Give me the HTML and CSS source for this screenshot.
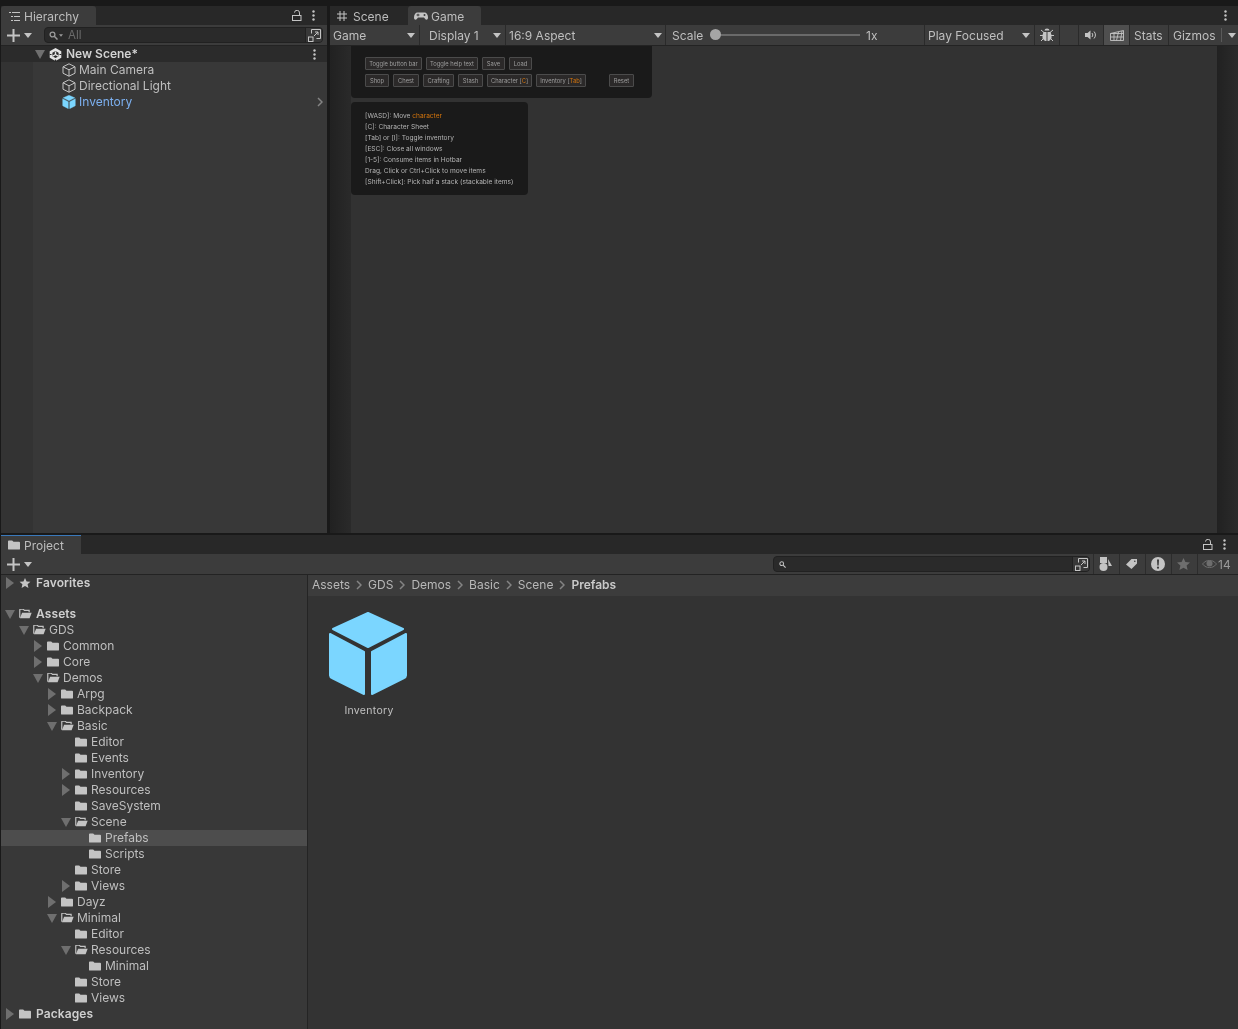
FILE: index.html
```html
<!DOCTYPE html>
<html lang="en">
<head>
<meta charset="utf-8">
<title>Unity Editor</title>
<link rel="stylesheet" href="styles.css">
</head>
<body>
<svg class="defs" width="0" height="0" aria-hidden="true">
  <symbol id="i-folder" viewBox="0 1 13 10"><path d="M0 2a1 1 0 0 1 1-1h3.500l1.500 1.500h6a1 1 0 0 1 1 1V10a1 1 0 0 1-1 1H1a1 1 0 0 1-1-1z" fill="currentColor"/></symbol>
  <symbol id="i-open" viewBox="0 1 14 11"><path d="M.7 10.500V2a.8.8 0 0 1 .8-.8h3l1.300 1.300h5.200v2" fill="none" stroke="currentColor" stroke-width="1.300"/><path d="M3.300 5h10.500l-2.300 6.300H.8z" fill="currentColor"/></symbol>
  <symbol id="i-right" viewBox="0 0 8 12"><path d="M0 0l8 6-8 6z" fill="currentColor"/></symbol>
  <symbol id="i-down" viewBox="0 0 10 9"><path d="M0 0h10L5 9z" fill="currentColor"/></symbol>
  <symbol id="i-drop" viewBox="0 0 8 5"><path d="M0 0h8L4 5z" fill="currentColor"/></symbol>
  <symbol id="i-chev" viewBox="0 0 6 10"><path d="M1 1l4 4-4 4" fill="none" stroke="currentColor" stroke-width="1.500"/></symbol>
  <symbol id="i-plus" viewBox="0 0 13 13"><path d="M5.500 0h2v5.500H13v2H7.500V13h-2V7.500H0v-2h5.500z" fill="currentColor"/></symbol>
  <symbol id="i-dots" viewBox="0 0 3 11"><circle cx="1.500" cy="1.500" r="1.200" fill="currentColor"/><circle cx="1.500" cy="5.500" r="1.200" fill="currentColor"/><circle cx="1.500" cy="9.500" r="1.200" fill="currentColor"/></symbol>
  <symbol id="i-lock" viewBox="0 0 10 11"><path d="M2.500 2.600A2.500 2.500 0 0 1 7.500 3V5.500" fill="none" stroke="currentColor"/><rect x=".5" y="5.500" width="8.500" height="5" fill="none" stroke="currentColor"/></symbol>
  <symbol id="i-list" viewBox="0 0 11 9"><path d="M0 .5h2M3 .5h8M2 4.500h2M5 4.500h6M2 8.500h2M5 8.500h6" stroke="currentColor" fill="none"/></symbol>
  <symbol id="i-search" viewBox="0 0 9 9"><circle cx="3.500" cy="3.500" r="2.400" fill="none" stroke="currentColor" stroke-width="1.300"/><path d="M5.300 5.300L8.500 8.500" stroke="currentColor" stroke-width="1.500"/></symbol>
  <symbol id="i-popout" viewBox="0 0 13 13"><path d="M3.500 4.500V.5h9v9h-4M6 7l4-4M7 3h3v3" fill="none" stroke="currentColor"/><rect x=".5" y="8" width="4.500" height="4.500" fill="none" stroke="currentColor"/></symbol>
  <symbol id="i-box" viewBox="0 0 14 14"><path d="M7 .8l6 3v6.400l-6 3-6-3V3.800zM1 3.800l6 3 6-3M7 6.800v6.400" fill="none" stroke="currentColor" stroke-linejoin="round"/></symbol>
  <symbol id="i-cube" viewBox="0 0 78 84"><path d="M39 1l35 16-35 18L4 17z" fill="currentColor" stroke="currentColor" stroke-width="2" stroke-linejoin="round"/><path d="M1 22l34 18v42L3 66a3 3 0 0 1-2-3z" fill="currentColor" stroke="currentColor" stroke-width="2" stroke-linejoin="round"/><path d="M77 22L43 40v42l32-16a3 3 0 0 0 2-3z" fill="currentColor" stroke="currentColor" stroke-width="2" stroke-linejoin="round"/></symbol>
  <symbol id="i-unity" viewBox="0 0 13 13"><path d="M6.500 0l5.800 3.300v6.400L6.500 13 .7 9.700V3.300z" fill="currentColor"/><path d="M6.500 3L9.600 4.800V8.300L6.500 10 3.400 8.300V4.800z" fill="#2b2b2b"/><path d="M6.500 6.500V3.600M6.500 6.500L3.600 8.100M6.500 6.500L9.400 8.100" stroke="currentColor" stroke-width="1.400"/><path d="M.7 6.500h1.800M12.300 6.500h-1.800M6.500 13v-1.500" stroke="#2b2b2b" stroke-width="1.200"/></symbol>
  <symbol id="i-star" viewBox="0 0 13 12"><path d="M6.500 0l1.900 4.100 4.600.5-3.400 3 1 4.400-4.100-2.300L2.400 12l1-4.400L0 4.600l4.600-.5z" fill="currentColor"/></symbol>
  <symbol id="i-pad" viewBox="0 0 14 8"><path d="M3.500.5h7C12.500.5 14 2.500 14 5.500c0 2.500-2 2.800-3 1.300L10 5.500H4L3 6.800c-1 1.500-3 1.200-3-1.300C0 2.500 1.500.500 3.500.500z" fill="currentColor"/><path d="M2.500 3h3M4 1.700v2.600" stroke="#3c3c3c"/><circle cx="10.500" cy="3" r="1" fill="#3c3c3c"/></symbol>
  <symbol id="i-hash" viewBox="0 0 10 10"><path d="M3 0v10M7 0v10M0 3h10M0 7h10" stroke="currentColor" fill="none"/></symbol>
  <symbol id="i-bug" viewBox="0 0 14 14"><path d="M4.500 2.500a2.500 2 0 0 1 5 0zM3.500 4h7l1 3v3.500L9 13H5l-2.500-2.500V7z" fill="currentColor"/><path d="M1 2l3 2.500M13 2l-3 2.500M0 7.500h3M14 7.500h-3M1 13l2.500-2.500M13 13l-2.500-2.500" stroke="currentColor" fill="none"/><path d="M7 4v9" stroke="#3c3c3c"/></symbol>
  <symbol id="i-sound" viewBox="0 0 12 10"><path d="M0 3h2.500L5.500.5v9L2.500 7H0z" fill="currentColor"/><path d="M7 3a3 3 0 0 1 0 4M9 1.500a5 5 0 0 1 0 7" fill="none" stroke="currentColor"/></symbol>
  <symbol id="i-res" viewBox="0 0 14 11"><path d="M.5 3.500L13.500.5v10H.5zM.5 7h13M.5 3.500h13M4 3v7.500M8.500 2L6.500 10.500M12 1l-1.500 9.500" fill="none" stroke="currentColor" stroke-width=".9"/></symbol>
  <symbol id="i-shapes" viewBox="0 0 13 14"><rect x="1" y="0" width="7" height="6" fill="currentColor"/><circle cx="4.500" cy="10" r="4" fill="currentColor"/><path d="M9 2l4 7H9.500z" fill="currentColor"/></symbol>
  <symbol id="i-tag" viewBox="0 0 11 10"><path d="M0 5.500L5.500 0H11v4.500L5.500 10z" fill="currentColor"/><circle cx="8.800" cy="2.200" r=".8" fill="#3c3c3c"/></symbol>
  <symbol id="i-warn" viewBox="0 0 14 14"><circle cx="7" cy="7" r="7" fill="currentColor"/><path d="M6 2.500h2l-.3 6H6.300z" fill="#3c3c3c"/><circle cx="7" cy="10.700" r="1.100" fill="#3c3c3c"/></symbol>
  <symbol id="i-eye" viewBox="0 0 15 8"><path d="M.5 4C3 1 5 .5 7.500.5S12 1 14.500 4C12 7 10 7.500 7.500 7.500S3 7 .5 4z" fill="none" stroke="currentColor"/><circle cx="7.500" cy="3.600" r="3" fill="currentColor"/></symbol>
</svg>

<div class="editor">
  <div class="top-strip"></div>

  <section class="top">
    <div class="panel hierarchy">
      <div class="tabbar">
        <div class="tab active hier-tab"><svg class="ic w11-9"><use href="#i-list"/></svg><span>Hierarchy</span></div>
        <div class="tab-actions">
          <svg class="ic w10-11"><use href="#i-lock"/></svg>
          <svg class="ic w3-11"><use href="#i-dots"/></svg>
        </div>
      </div>
      <div class="toolbar">
        <div class="addbtn"><svg class="ic w13"><use href="#i-plus"/></svg><svg class="ic w8-5"><use href="#i-drop"/></svg></div>
        <div class="search hier-search">
          <svg class="ic w9 dim"><use href="#i-search"/></svg>
          <svg class="ic drop-mini dim"><use href="#i-drop"/></svg>
          <span class="search-text">All</span>
          <span class="search-pop"><svg class="ic w13"><use href="#i-popout"/></svg></span>
        </div>
      </div>
      <div class="hier-list">
        <div class="scene-row">
          <svg class="tri-d"><use href="#i-down"/></svg>
          <svg class="ic w13 unity"><use href="#i-unity"/></svg>
          <strong>New Scene*</strong>
          <svg class="ic w3-11 end"><use href="#i-dots"/></svg>
        </div>
        <div class="hier-row"><svg class="ic w14"><use href="#i-box"/></svg><span>Main Camera</span></div>
        <div class="hier-row"><svg class="ic w14"><use href="#i-box"/></svg><span>Directional Light</span></div>
        <div class="hier-row prefab"><svg class="ic w14 cube"><use href="#i-cube"/></svg><span>Inventory</span><svg class="chev"><use href="#i-chev"/></svg></div>
      </div>
    </div>

    <div class="panel game">
      <div class="tabbar">
        <div class="tab scene-tab"><svg class="ic w10"><use href="#i-hash"/></svg><span>Scene</span></div>
        <div class="tab active game-tab"><svg class="ic w14-8"><use href="#i-pad"/></svg><span>Game</span></div>
        <div class="tab-actions tight"><svg class="ic w3-11"><use href="#i-dots"/></svg></div>
      </div>
      <div class="toolbar game-toolbar">
        <div class="tool t-game"><span>Game</span><svg class="ic w8-5"><use href="#i-drop"/></svg></div>
        <div class="tool t-display"><span>Display 1</span><svg class="ic w8-5"><use href="#i-drop"/></svg></div>
        <div class="tool t-aspect"><span>16:9 Aspect</span><svg class="ic w8-5"><use href="#i-drop"/></svg></div>
        <div class="tool t-scale">
          <span class="scale-label">Scale</span>
          <span class="slider"><span class="knob"></span></span>
          <span class="scale-val">1x</span>
        </div>
        <div class="tool t-play"><span>Play Focused</span><svg class="ic w8-5"><use href="#i-drop"/></svg></div>
        <div class="tool t-bug"><svg class="ic w14"><use href="#i-bug"/></svg></div>
        <div class="tool t-empty"></div>
        <div class="tool t-sound"><svg class="ic w12-10"><use href="#i-sound"/></svg></div>
        <div class="tool t-res"><svg class="ic w14-11"><use href="#i-res"/></svg></div>
        <div class="tool t-stats"><span>Stats</span></div>
        <div class="tool t-gizmos"><span>Gizmos</span><i class="vsep"></i><svg class="ic w8-5"><use href="#i-drop"/></svg></div>
      </div>
      <div class="game-body">
        <div class="letterbox left"></div>
        <div class="viewport">
          <div class="hud hud-bar">
            <div class="btn-row">
              <span class="gbtn b-tbb">Toggle button bar</span>
              <span class="gbtn b-tht">Toggle help text</span>
              <span class="gbtn b-save">Save</span>
              <span class="gbtn b-save">Load</span>
            </div>
            <div class="btn-row">
              <span class="gbtn b-shop">Shop</span>
              <span class="gbtn b-chest">Chest</span>
              <span class="gbtn b-craft">Crafting</span>
              <span class="gbtn b-stash">Stash</span>
              <span class="gbtn b-char">Character [<em>C</em>]</span>
              <span class="gbtn b-inv">Inventory [<em>Tab</em>]</span>
              <span class="gbtn b-reset">Reset</span>
            </div>
          </div>
          <div class="hud hud-help">
            <p>[WASD]: Move <em>character</em></p>
            <p>[C]: Character Sheet</p>
            <p>[Tab] or [I]: Toggle inventory</p>
            <p>[ESC]: Close all windows</p>
            <p>[1-5]: Consume items in Hotbar</p>
            <p>Drag, Click or Ctrl+Click to move items</p>
            <p>[Shift+Click]: Pick half a stack (stackable items)</p>
          </div>
        </div>
        <div class="letterbox right"></div>
      </div>
    </div>
  </section>

  <section class="panel project">
    <div class="tabbar">
      <div class="tab active project-tab"><svg class="ic folder-ic"><use href="#i-folder"/></svg><span>Project</span></div>
      <div class="tab-actions">
        <svg class="ic w10-11"><use href="#i-lock"/></svg>
        <svg class="ic w3-11"><use href="#i-dots"/></svg>
      </div>
    </div>
    <div class="toolbar project-toolbar">
      <div class="addbtn"><svg class="ic w13"><use href="#i-plus"/></svg><svg class="ic w8-5"><use href="#i-drop"/></svg></div>
      <div class="search project-search">
        <svg class="ic w7"><use href="#i-search"/></svg>
        <span class="search-pop"><svg class="ic w13"><use href="#i-popout"/></svg></span>
      </div>
      <div class="ptool"><svg class="ic w13-14"><use href="#i-shapes"/></svg></div>
      <div class="ptool"><svg class="ic w11-10"><use href="#i-tag"/></svg></div>
      <div class="ptool"><svg class="ic w14"><use href="#i-warn"/></svg></div>
      <div class="ptool"><svg class="ic w13-12 star-dim"><use href="#i-star"/></svg></div>
      <div class="ptool eye"><svg class="ic w15-8 star-dim"><use href="#i-eye"/></svg><span>14</span></div>
    </div>
    <div class="project-body">
      <nav class="tree">
        <div class="row d0 spaced"><svg class="tri-r"><use href="#i-right"/></svg><svg class="ic folder-ic"><use href="#i-star"/></svg><strong>Favorites</strong></div>
        <div class="row d0"><svg class="tri-d"><use href="#i-down"/></svg><svg class="ic open-ic"><use href="#i-open"/></svg><strong>Assets</strong></div>
        <div class="row d1"><svg class="tri-d"><use href="#i-down"/></svg><svg class="ic open-ic"><use href="#i-open"/></svg><span>GDS</span></div>
        <div class="row d2"><svg class="tri-r"><use href="#i-right"/></svg><svg class="ic folder-ic"><use href="#i-folder"/></svg><span>Common</span></div>
        <div class="row d2"><svg class="tri-r"><use href="#i-right"/></svg><svg class="ic folder-ic"><use href="#i-folder"/></svg><span>Core</span></div>
        <div class="row d2"><svg class="tri-d"><use href="#i-down"/></svg><svg class="ic open-ic"><use href="#i-open"/></svg><span>Demos</span></div>
        <div class="row d3"><svg class="tri-r"><use href="#i-right"/></svg><svg class="ic folder-ic"><use href="#i-folder"/></svg><span>Arpg</span></div>
        <div class="row d3"><svg class="tri-r"><use href="#i-right"/></svg><svg class="ic folder-ic"><use href="#i-folder"/></svg><span>Backpack</span></div>
        <div class="row d3"><svg class="tri-d"><use href="#i-down"/></svg><svg class="ic open-ic"><use href="#i-open"/></svg><span>Basic</span></div>
        <div class="row d4"><i class="tri-gap"></i><svg class="ic folder-ic"><use href="#i-folder"/></svg><span>Editor</span></div>
        <div class="row d4"><i class="tri-gap"></i><svg class="ic folder-ic"><use href="#i-folder"/></svg><span>Events</span></div>
        <div class="row d4"><svg class="tri-r"><use href="#i-right"/></svg><svg class="ic folder-ic"><use href="#i-folder"/></svg><span>Inventory</span></div>
        <div class="row d4"><svg class="tri-r"><use href="#i-right"/></svg><svg class="ic folder-ic"><use href="#i-folder"/></svg><span>Resources</span></div>
        <div class="row d4"><i class="tri-gap"></i><svg class="ic folder-ic"><use href="#i-folder"/></svg><span>SaveSystem</span></div>
        <div class="row d4"><svg class="tri-d"><use href="#i-down"/></svg><svg class="ic open-ic"><use href="#i-open"/></svg><span>Scene</span></div>
        <div class="row d5 selected"><i class="tri-gap"></i><svg class="ic folder-ic"><use href="#i-folder"/></svg><span>Prefabs</span></div>
        <div class="row d5"><i class="tri-gap"></i><svg class="ic folder-ic"><use href="#i-folder"/></svg><span>Scripts</span></div>
        <div class="row d4"><i class="tri-gap"></i><svg class="ic folder-ic"><use href="#i-folder"/></svg><span>Store</span></div>
        <div class="row d4"><svg class="tri-r"><use href="#i-right"/></svg><svg class="ic folder-ic"><use href="#i-folder"/></svg><span>Views</span></div>
        <div class="row d3"><svg class="tri-r"><use href="#i-right"/></svg><svg class="ic folder-ic"><use href="#i-folder"/></svg><span>Dayz</span></div>
        <div class="row d3"><svg class="tri-d"><use href="#i-down"/></svg><svg class="ic open-ic"><use href="#i-open"/></svg><span>Minimal</span></div>
        <div class="row d4"><i class="tri-gap"></i><svg class="ic folder-ic"><use href="#i-folder"/></svg><span>Editor</span></div>
        <div class="row d4"><svg class="tri-d"><use href="#i-down"/></svg><svg class="ic open-ic"><use href="#i-open"/></svg><span>Resources</span></div>
        <div class="row d5"><i class="tri-gap"></i><svg class="ic folder-ic"><use href="#i-folder"/></svg><span>Minimal</span></div>
        <div class="row d4"><i class="tri-gap"></i><svg class="ic folder-ic"><use href="#i-folder"/></svg><span>Store</span></div>
        <div class="row d4"><i class="tri-gap"></i><svg class="ic folder-ic"><use href="#i-folder"/></svg><span>Views</span></div>
        <div class="row d0"><svg class="tri-r"><use href="#i-right"/></svg><svg class="ic folder-ic"><use href="#i-folder"/></svg><strong>Packages</strong></div>
      </nav>
      <div class="browser">
        <div class="crumbs">
          <span>Assets</span><svg class="chev"><use href="#i-chev"/></svg><span>GDS</span><svg class="chev"><use href="#i-chev"/></svg><span>Demos</span><svg class="chev"><use href="#i-chev"/></svg><span>Basic</span><svg class="chev"><use href="#i-chev"/></svg><span>Scene</span><svg class="chev"><use href="#i-chev"/></svg><strong>Prefabs</strong>
        </div>
        <div class="assets">
          <figure class="asset">
            <svg class="big-cube"><use href="#i-cube"/></svg>
            <figcaption>Inventory</figcaption>
          </figure>
        </div>
      </div>
    </div>
  </section>
</div>
</body>
</html>
```

FILE: styles.css
```css
* { box-sizing: border-box; }
html, body { margin: 0; padding: 0; height: 100%; background: #191919; overflow: hidden; }
body { font-family: Inter, "Liberation Sans", sans-serif; font-size: 12px; color: #bfbfbf; }
.defs { position: absolute; }
svg { display: block; flex: none; }
.editor { width: 1238px; height: 1029px; display: flex; flex-direction: column; will-change: transform; }
.top-strip { height: 6px; flex: none; background: #191919; }
.top { height: 527px; flex: none; display: flex; gap: 3px; padding-left: 1px; }
.panel { display: flex; flex-direction: column; }
.hierarchy { width: 326px; background: #383838; }
.game { flex: 1; min-width: 0; }
.project { flex: 1; min-height: 0; margin: 2px 0 0 1px; }

.ic { color: #c4c4c4; }
.w13 { width: 13px; height: 13px; }
.w14 { width: 14px; height: 14px; }
.w10 { width: 10px; height: 10px; }
.w9 { width: 9px; height: 9px; }
.w7 { width: 7px; height: 7px; }
.w11-9 { width: 11px; height: 9px; }
.w10-11 { width: 10px; height: 11px; }
.w3-11 { width: 3px; height: 11px; }
.w8-5 { width: 8px; height: 5px; }
.w14-8 { width: 14px; height: 8px; }
.w12-10 { width: 12px; height: 10px; }
.w14-11 { width: 14px; height: 11px; }
.w13-12 { width: 13px; height: 12px; }
.w13-14 { width: 13px; height: 14px; }
.w11-10 { width: 11px; height: 10px; }
.w15-8 { width: 15px; height: 8px; }
.folder-ic { width: 12px; height: 10px; }
.open-ic { width: 13px; height: 10px; }
.dim { color: #9a9a9a; }
.star-dim { color: #6e6e6e; }
.chev { width: 6px; height: 10px; color: #848484; }

.tabbar { height: 19px; flex: none; display: flex; align-items: stretch; background: #282828; }
.tab { display: flex; align-items: center; padding-top: 1px; color: #bdbdbd; }
.tab.active { background: #3c3c3c; }
.hier-tab { width: 95px; padding-left: 8px; gap: 4px; border-radius: 3px 3px 0 0; }
.scene-tab { width: 78px; padding-left: 7px; gap: 6px; }
.game-tab { width: 73px; padding-left: 6px; gap: 3px; border-radius: 3px 3px 0 0; }
.project-tab { width: 80px; padding-left: 7px; gap: 4px; box-shadow: inset 0 1px 0 #3a79bb; }
.tab-actions { margin-left: auto; display: flex; align-items: center; gap: 10px; padding-right: 12px; }
.tab-actions.tight { padding-right: 11px; }

.toolbar { height: 21px; flex: none; display: flex; align-items: center; background: #3c3c3c; border-bottom: 1px solid #232323; }
.addbtn { width: 43px; flex: none; display: flex; align-items: center; gap: 4px; padding-left: 6px; }
.search { height: 16px; background: #2a2a2a; border: 1px solid #212121; border-radius: 4px; display: flex; align-items: center; }
.hier-search { width: 279px; padding-left: 4px; }
.drop-mini { width: 4px; height: 3px; margin-left: 1px; }
.search-text { margin-left: 5px; font-size: 11.500px; color: #6b6b6b; }
.search-pop { margin-left: auto; width: 17px; height: 14px; display: flex; align-items: center; justify-content: center; background: #383838; border-left: 1px solid #212121; border-radius: 0 3px 3px 0; }

.hier-list { flex: 1; background: linear-gradient(90deg, #333 0, #333 32px, #383838 32px); }
.scene-row { height: 16px; display: flex; align-items: center; padding-left: 34px; background: #2b2b2b; color: #d2d2d2; }
.scene-row .tri-d { margin-right: 4px; }
.scene-row strong { margin: 0 0 2px 4px; font-weight: 600; }
.scene-row .end { margin-left: auto; margin-right: 11px; }
.unity { color: #e4e4e4; }
.hier-row { height: 16px; display: flex; align-items: center; gap: 3px; padding-left: 61px; }
.hier-row span { margin-bottom: 2px; }
.prefab { color: #7cb0f0; }
.cube { color: #7bd6ff; }
.hier-row .chev { margin-left: auto; margin-right: 4px; }

.tri-d { width: 10px; height: 9px; color: #6f6f6f; }
.tri-r { width: 8px; height: 12px; color: #6f6f6f; }

.game-toolbar .tool { height: 20px; flex: none; display: flex; align-items: center; border-right: 1px solid #2a2a2a; }
.t-game { width: 90px; padding: 0 4px 0 3px; justify-content: space-between; }
.t-display { width: 86px; padding: 0 4px 0 9px; justify-content: space-between; }
.t-aspect { width: 160px; padding: 0 3px 0 3px; justify-content: space-between; }
.t-scale { width: 259px; padding-left: 6px; }
.scale-label { width: 38px; flex: none; }
.slider { width: 150px; height: 2px; background: #6a6a6a; position: relative; display: block; flex: none; }
.knob { position: absolute; left: 0; top: -5px; width: 11px; height: 11px; border-radius: 50%; background: #a5a5a5; }
.scale-val { margin-left: 6px; }
.t-play { width: 110px; padding: 0 4px 0 3px; justify-content: space-between; }
.t-bug { width: 25px; justify-content: center; }
.t-empty { width: 19px; }
.t-sound { width: 25px; justify-content: center; }
.t-res { width: 26px; justify-content: center; background: #4f4f4f; }
.t-stats { width: 39px; padding-left: 4px; }
.t-gizmos { flex: 1 !important; padding-left: 4px; border-right: 0 !important; }
.vsep { width: 1px; height: 14px; background: #5a5a5a; margin: 0 6px 0 5px; }

.game-body { flex: 1; display: flex; min-height: 0; }
.letterbox { width: 21px; flex: none; background: linear-gradient(90deg, #212121, #2a2a2a); }
.letterbox.right { flex: 1; background: linear-gradient(90deg, #212121, #2b2b2b); }
.viewport { width: 866px; flex: none; background: #323232; font-size: 6.600px; color: #b4b4b4; display: flex; flex-direction: column; align-items: flex-start; gap: 4px; }
.hud { background: #1a1a1a; border-radius: 0 0 4px 4px; }
.hud-bar { width: 301px; height: 52px; padding: 11px 14px 0; display: flex; flex-direction: column; gap: 4px; }
.hud-help { width: 177px; height: 93px; padding: 9px 14px 0; border-radius: 4px; line-height: 11px; }
.hud-help p { margin: 0; white-space: nowrap; filter: blur(.2px); }
.hud em, .gbtn em { font-style: normal; color: #d5750c; }
.btn-row { display: flex; gap: 4px; }
.gbtn { height: 13px; display: flex; align-items: center; justify-content: center; background: #2b2929; border: 1px solid #4b4b4b; border-radius: 1px; color: #9e9e9e; font-size: 5.800px; white-space: pre; filter: blur(.15px); }
.b-tbb { width: 57px; }
.b-tht { width: 52px; }
.b-save { width: 23px; }
.b-shop { width: 24px; }
.b-chest { width: 26px; }
.b-craft { width: 31px; }
.b-stash { width: 25px; }
.b-char { width: 45px; }
.b-inv { width: 50px; }
.b-reset { width: 25px; margin-left: 19px; }

.project-toolbar { height: 21px; }
.project-search { width: 317px; margin-left: 729px; padding-left: 5px; }
.ptool { width: 26px; height: 20px; flex: none; display: flex; align-items: center; justify-content: center; padding-right: 2px; border-left: 1px solid #2c2c2c; }
.project-search + .ptool { margin-left: 3px; }
.eye { width: 40px; gap: 1px; justify-content: flex-start; padding: 0 0 0 4px; color: #9a9a9a; }

.project-body { flex: 1; display: flex; min-height: 0; }
.tree { width: 306px; flex: none; background: #383838; }
.row { height: 16px; display: flex; align-items: center; white-space: nowrap; }
.row > span, .row > strong { margin-bottom: 2px; }
.row .folder-ic { margin-right: 4px; }
.row .open-ic { margin-right: 3px; }
.row strong { font-weight: 600; letter-spacing: .1px; color: #cfcfcf; margin-left: 1px; }
.row .tri-r { margin-left: 2px; margin-right: 5px; }
.row .tri-d { margin-left: 1px; margin-right: 4px; }
.tri-gap { width: 15px; flex: none; }
.d0 { padding-left: 3px; }
.d1 { padding-left: 17px; }
.d2 { padding-left: 31px; }
.d3 { padding-left: 45px; }
.d4 { padding-left: 59px; }
.d5 { padding-left: 73px; }
.spaced { margin-bottom: 15px; }
.selected { background: #4d4d4d; }

.browser { flex: 1; min-width: 0; display: flex; flex-direction: column; background: #333; border-left: 1px solid #242424; }
.crumbs { height: 21px; flex: none; display: flex; align-items: center; padding: 0 0 2px 4px; background: #3c3c3c; color: #b8b8b8; }
.crumbs .chev { margin: 1px 6px 0; }
.crumbs strong { font-weight: 600; color: #c9c9c9; }
.assets { padding: 16px 0 0 21px; }
.asset { margin: 0; width: 78px; display: flex; flex-direction: column; align-items: center; gap: 8px; }
.big-cube { width: 78px; height: 84px; color: #7bd6ff; }
.asset figcaption { font-size: 10.500px; letter-spacing: .3px; padding-left: 2px; color: #c0c0c0; white-space: nowrap; }
```
